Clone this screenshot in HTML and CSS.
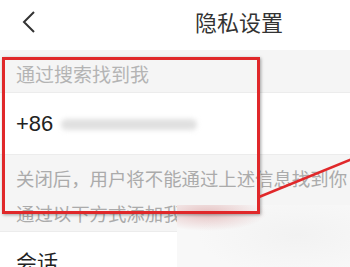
FILE: index.html
```html
<!DOCTYPE html>
<html lang="zh">
<head>
<meta charset="utf-8">
<link rel="stylesheet" href="styles.css">
</head>
<body>
<div class="page">
  <header class="topbar">
    <svg class="back" width="16" height="24" viewBox="0 0 16 24"><polyline points="13,2 3,12 13,22" fill="none" stroke="#333" stroke-width="2"/></svg>
    <div class="title">隐私设置</div>
  </header>
  <div class="sec-head">通过搜索找到我</div>
  <div class="row"><span class="cc">+86</span><span class="blur"></span></div>
  <div class="sec-foot">
    <div class="line">关闭后，用户将不能通过上述信息找到你</div>
    <div class="line">通过以下方式添加我</div>
  </div>
  <div class="row2">会话</div>

  <div class="mark"></div>
  <div class="redbox"></div>
  <svg class="pointer" width="350" height="267" viewBox="0 0 350 267"><line x1="259" y1="197" x2="352" y2="159" stroke="#e0282a" stroke-width="2.5"/></svg>
</div>
</body>
</html>
```
FILE: styles.css
```css
* { box-sizing: border-box; }
html, body { margin: 0; padding: 0; }
body {
  width: 350px; height: 267px; overflow: hidden; background: #fff;
  font-family: "Noto Sans CJK SC", "Noto Sans", sans-serif;
}
.page { position: relative; width: 350px; height: 267px; overflow: hidden; }
.topbar {
  height: 50px; display: flex; align-items: center; background: #fff;
}
.back { margin-left: 21px; margin-top: -6px; }
.title {
  margin-left: 158px; margin-top: -8px; font-size: 22px; color: #333;
}
.sec-head {
  height: 43px; background: #f5f5f5; border-bottom: 1px solid #ececec;
  padding-left: 16px; display: flex; align-items: center;
  font-size: 19px; color: #b4b4b4; padding-top: 5px;
}
.row {
  height: 62px; display: flex; align-items: center; padding-left: 16px; background: #fff;
  border-bottom: 1px solid #ececec;
}
.cc { font-family: "Liberation Sans", Arial, sans-serif; font-size: 22px; color: #222; }
.blur {
  width: 136px; height: 11px; margin-left: 8px; margin-top: 2px;
  background: #e0e0e0; border-radius: 6px; filter: blur(2.5px);
}
.sec-foot {
  height: 77px; background: #f5f5f5; padding-left: 16px; padding-top: 6px;
  border-bottom: 1px solid #ececec;
}
.line { height: 35px; line-height: 35px; font-size: 18.4px; color: #ababab; white-space: nowrap; }
.row2 {
  padding-left: 16px; padding-top: 14px; font-size: 21px; color: #222;
}
.redbox {
  position: absolute; left: 2px; top: 57px; width: 258px; height: 157px;
  border: 3px solid #e0282a; box-shadow: 1px 1px 3px rgba(0,0,0,0.35);
}
.pointer { position: absolute; left: 0; top: 0; }
.mark {
  position: absolute; left: 177px; top: 205px; width: 180px; height: 70px;
  background:
    radial-gradient(ellipse 60px 18px at 30px 8px, rgba(225,180,180,0.8), rgba(240,220,220,0) 100%),
    radial-gradient(ellipse 100px 40px at 120px 30px, #f2f2f2, #f8f8f8 100%);
}
```
